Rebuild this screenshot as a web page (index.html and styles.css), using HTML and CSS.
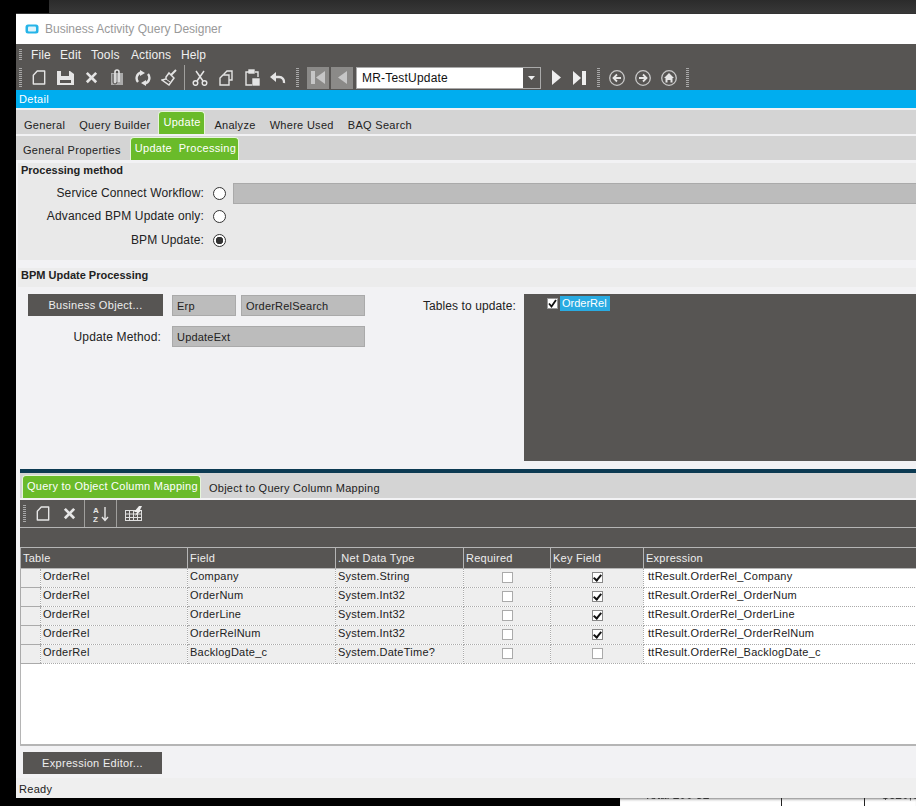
FILE: index.html
```html
<!DOCTYPE html>
<html lang="en">
<head>
<meta charset="utf-8">
<title>Business Activity Query Designer</title>
<link rel="stylesheet" href="styles.css">
</head>
<body>
<svg class="defs" width="0" height="0" aria-hidden="true">
  <symbol id="i-new" viewBox="0 0 16 18"><path d="M6 1.500h8.500v15h-13V6.500z" fill="none" stroke="currentColor" stroke-width="1.600" stroke-linejoin="round"/></symbol>
  <symbol id="i-x" viewBox="0 0 16 16"><path d="M2 4l2-2 4 4 4-4 2 2-4 4 4 4-2 2-4-4-4 4-2-2 4-4z" fill="currentColor"/></symbol>
</svg>
<div class="screen">
  <div class="top-strip"></div>
  <div class="window">
    <header class="titlebar">
      <svg class="app-icon" width="14" height="10" viewBox="0 0 14 10"><rect x="0.5" y="0.5" width="13" height="9" rx="2.5" fill="#25b4e8"/><rect x="3" y="2.5" width="8" height="5" rx="1" fill="#dff4fc"/></svg>
      <span class="title">Business Activity Query Designer</span>
    </header>
    <nav class="menubar">
      <i class="grip"></i>
      <span class="menu m1">File</span><span class="menu m2">Edit</span><span class="menu m3">Tools</span><span class="menu m4">Actions</span><span class="menu m5">Help</span>
    </nav>
    <div class="toolbar">
      <i class="grip"></i>
      <span class="tool"><svg width="14" height="17"><use href="#i-new"/></svg></span>
      <span class="tool"><svg width="17" height="15" viewBox="0 0 17 15"><path d="M0 1h13l4 3v11H0z" fill="currentColor"/><rect x="4" y="1" width="8" height="5" fill="#575553"/><rect x="3" y="10" width="11" height="3" fill="#575553"/></svg></span>
      <span class="tool"><svg width="15" height="15"><use href="#i-x"/></svg></span>
      <span class="tool"><svg width="16" height="17" viewBox="0 0 16 17"><path d="M2 4h12v12H2z" fill="#aaa"/><path d="M6 14V3a2 2 0 0 1 4 0v10" fill="none" stroke="#e4e4e4" stroke-width="1.600"/><path d="M4 5v8a2 2 0 0 0 4 0" fill="none" stroke="#575553" stroke-width="1"/></svg></span>
      <span class="tool"><svg width="16" height="16" viewBox="0 0 16 16" fill="none" stroke="currentColor" stroke-width="2.400"><path d="M3 12A6 6 0 0 1 6 2.400M13 4a6 6 0 0 1-3 9.600"/><path d="M5 0l5 3-5 3zM11 16l-5-3 5-3z" fill="currentColor" stroke="none"/></svg></span>
      <span class="tool"><svg width="17" height="17" viewBox="0 0 17 17"><path d="M10 6l5-5" stroke="currentColor" stroke-width="2"/><path d="M8 4l5 5-5 7-7-5 4-1 0-2z" fill="none" stroke="currentColor" stroke-width="1.500"/><path d="M5 10l4 3" stroke="currentColor"/></svg></span>
      <i class="sep"></i>
      <span class="tool"><svg width="16" height="16" viewBox="0 0 16 16" fill="none" stroke="currentColor" stroke-width="1.500"><circle cx="3.500" cy="13" r="2.300"/><circle cx="12.500" cy="13" r="2.300"/><path d="M5 11L12 1M11 11L4 1"/></svg></span>
      <span class="tool"><svg width="14" height="16" viewBox="0 0 14 16" fill="none" stroke="currentColor" stroke-width="1.400"><path d="M5 5V4l3-3h5v9h-3"/><path d="M4 5h6v10H1V8z"/></svg></span>
      <span class="tool"><svg width="15" height="17" viewBox="0 0 15 17" fill="none" stroke="currentColor" stroke-width="1.400"><path d="M5 3H1v13h6M10 3h3v5"/><rect x="4" y="1" width="5" height="3" fill="currentColor"/><rect x="8" y="10" width="6" height="6" fill="currentColor"/></svg></span>
      <span class="tool"><svg width="16" height="12" viewBox="0 0 16 12" fill="none" stroke="currentColor" stroke-width="2.400"><path d="M4 5h5a5 5 0 0 1 5 6"/><path d="M0 5l6-5v10z" fill="currentColor" stroke="none"/></svg></span>
      <i class="grip gap-grip"></i>
      <span class="navbtn"><svg width="14" height="15" viewBox="0 0 14 15"><rect x="0" y="1" width="4" height="13" fill="#c6c6c6"/><path d="M14 1v13L5 7.500z" fill="#c6c6c6"/></svg></span>
      <span class="navbtn"><svg width="9" height="15" viewBox="0 0 9 15"><path d="M9 1v13L0 7.500z" fill="#c6c6c6"/></svg></span>
      <div class="combo"><span class="combo-text">MR-TestUpdate</span><span class="combo-btn"><svg width="7" height="4"><path d="M0 0h7L3.500 4z" fill="#eee"/></svg></span></div>
      <span class="tool play"><svg width="9" height="15" viewBox="0 0 9 15"><path d="M0 0l9 7.500L0 15z" fill="#eee"/></svg></span>
      <span class="tool last"><svg width="13" height="14" viewBox="0 0 13 14"><path d="M0 0l8 7-8 7z" fill="#eee"/><rect x="9" y="0" width="4" height="14" fill="#eee"/></svg></span>
      <i class="grip grip-b"></i>
      <span class="circle"><svg width="16" height="16" viewBox="0 0 16 16"><circle cx="8" cy="8" r="7.300" fill="none" stroke="#c8c8c8" stroke-width="1.300"/><path d="M12 8H5M8 4.500L4.500 8 8 11.500" fill="none" stroke="#e6e6e6" stroke-width="1.800"/></svg></span>
      <span class="circle"><svg width="16" height="16" viewBox="0 0 16 16"><circle cx="8" cy="8" r="7.300" fill="none" stroke="#c8c8c8" stroke-width="1.300"/><path d="M4 8h7M8 4.500L11.500 8 8 11.500" fill="none" stroke="#e6e6e6" stroke-width="1.800"/></svg></span>
      <span class="circle"><svg width="16" height="16" viewBox="0 0 16 16"><circle cx="8" cy="8" r="7.300" fill="none" stroke="#c8c8c8" stroke-width="1.300"/><path d="M8 3l5 5h-1.500v4.500h-2V10h-3v2.500h-2V8H3z" fill="#e6e6e6"/></svg></span>
      <i class="grip grip-c"></i>
    </div>
    <div class="detail-bar">Detail</div>
    <div class="tabs tabs-a">
      <span class="tab">General</span><span class="tab">Query Builder</span><span class="tab on">Update</span><span class="tab">Analyze</span><span class="tab">Where Used</span><span class="tab">BAQ Search</span>
    </div>
    <div class="tabs tabs-b">
      <span class="tab">General Properties</span><span class="tab on">Update&nbsp; Processing</span>
    </div>
    <main class="content">
      <section class="group-method">
        <h2 class="group-title">Processing method</h2>
        <div class="method-row"><span class="method-label">Service Connect Workflow:</span><i class="radio"></i><span class="field field-wide"></span></div>
        <div class="method-row"><span class="method-label">Advanced BPM Update only:</span><i class="radio"></i></div>
        <div class="method-row"><span class="method-label">BPM Update:</span><i class="radio checked"></i></div>
      </section>
      <section class="group-bpm">
        <h2 class="group-title bpm-title">BPM Update Processing</h2>
        <div class="bpm-body">
          <div class="bpm-left">
            <div class="bpm-row"><span class="btn btn-bo">Business Object...</span><span class="field f-erp">Erp</span><span class="field f-search">OrderRelSearch</span></div>
            <div class="bpm-row row-method"><span class="um-label">Update Method:</span><span class="field f-method">UpdateExt</span></div>
          </div>
          <span class="tables-label">Tables to update:</span>
          <div class="listbox"><span class="lb-item"><span class="lb-check"><svg width="9" height="9" viewBox="0 0 9 9"><path d="M1 4.500l2.500 3L8 1" fill="none" stroke="#111" stroke-width="1.800"/></svg></span><span class="lb-text">OrderRel</span></span></div>
        </div>
      </section>
      <section class="mapping">
        <div class="tabs tabs-c">
          <span class="tab on">Query to Object Column Mapping</span><span class="tab">Object to Query Column Mapping</span>
        </div>
        <div class="grid-toolbar">
          <i class="grip"></i>
          <span class="tool"><svg width="14" height="17"><use href="#i-new"/></svg></span>
          <span class="tool"><svg width="15" height="15"><use href="#i-x"/></svg></span>
          <i class="sep"></i>
          <span class="tool"><svg width="16" height="16" viewBox="0 0 16 16"><text x="0" y="7" class="az">A</text><text x="0" y="15.500" class="az">Z</text><path d="M12 1v13M9 11l3 3.500 3-3.500" fill="none" stroke="currentColor" stroke-width="1.400"/></svg></span>
          <i class="sep"></i>
          <span class="tool"><svg width="17" height="15" viewBox="0 0 17 15"><path d="M0 4.500h17M0 8h17M0 11.500h17M.5 4v11M4.500 4v11M8.500 4v11M12.500 4v11M16.500 4v11M0 14.500h17" stroke="#e0e0e0" fill="none"/><path d="M9 6l5-6h3l-2 4h2l-7 6 2-4z" fill="#eee"/></svg></span>
        </div>
        <div class="group-band"></div>
        <table class="grid">
          <colgroup><col class="c0"><col class="c1"><col class="c2"><col class="c3"><col class="c4"><col class="c5"><col></colgroup>
          <thead>
            <tr><th colspan="2">Table</th><th>Field</th><th>.Net Data Type</th><th>Required</th><th>Key Field</th><th>Expression</th></tr>
          </thead>
          <tbody>
            <tr><td class="rh"></td><td>OrderRel</td><td>Company</td><td>System.String</td><td class="cb"><i class="check"></i></td><td class="cb"><i class="check on"></i></td><td class="expr">ttResult.OrderRel_Company</td></tr>
            <tr><td class="rh"></td><td>OrderRel</td><td>OrderNum</td><td>System.Int32</td><td class="cb"><i class="check"></i></td><td class="cb"><i class="check on"></i></td><td class="expr">ttResult.OrderRel_OrderNum</td></tr>
            <tr><td class="rh"></td><td>OrderRel</td><td>OrderLine</td><td>System.Int32</td><td class="cb"><i class="check"></i></td><td class="cb"><i class="check on"></i></td><td class="expr">ttResult.OrderRel_OrderLine</td></tr>
            <tr><td class="rh"></td><td>OrderRel</td><td>OrderRelNum</td><td>System.Int32</td><td class="cb"><i class="check"></i></td><td class="cb"><i class="check on"></i></td><td class="expr">ttResult.OrderRel_OrderRelNum</td></tr>
            <tr><td class="rh"></td><td>OrderRel</td><td>BacklogDate_c</td><td>System.DateTime?</td><td class="cb"><i class="check"></i></td><td class="cb"><i class="check"></i></td><td class="expr">ttResult.OrderRel_BacklogDate_c</td></tr>
          </tbody>
        </table>
        <div class="grid-empty"></div>
        <div class="actions"><span class="btn btn-expr">Expression Editor...</span></div>
      </section>
    </main>
    <footer class="status">Ready</footer>
  </div>
  <div class="behind">
    <span class="b-cell b1"><span class="b-text">Total 200 52</span></span><span class="b-cell b2"></span><span class="b-cell b3"><span class="b-text">$620,000</span></span>
  </div>
</div>
</body>
</html>
```
FILE: styles.css
```css
* { box-sizing: border-box; }
html, body { margin: 0; padding: 0; background: #000; }
body { font: 12px/14px "Liberation Sans", Arial, sans-serif; color: #222; }
.defs { position: absolute; }
.screen { width: 916px; height: 806px; overflow: hidden; background: #000; }
.top-strip { height: 13px; margin-left: 49px; background: linear-gradient(#2b2b2b, #383838); }
.window { width: 915px; height: 785px; margin-left: 16px; display: flex; flex-direction: column; border-top: 1px solid #333; background: #f2f2f4; }

.titlebar { height: 30px; flex: none; background: #fff; display: flex; align-items: center; padding-left: 9px; gap: 6px; }
.title { color: #999; }

.menubar { height: 21px; flex: none; background: #575553; color: #f0f0f0; position: relative; display: flex; align-items: center; letter-spacing: .1px; }
.menu { position: absolute; top: 4px; }
.m1 { left: 15px; } .m2 { left: 44px; } .m3 { left: 75px; } .m4 { left: 115px; } .m5 { left: 165px; }
.grip { display: block; width: 3px; height: 17px; flex: none; background: repeating-linear-gradient(#a8a8a8 0 1px, transparent 1px 2px); }
.menubar .grip { height: 12px; margin-left: 3px; }

.toolbar { height: 25px; flex: none; background: #575553; color: #e4e4e4; display: flex; align-items: center; padding-left: 3px; }
.toolbar > .grip { height: 20px; margin-right: 4px; }
.tool { width: 26px; display: flex; justify-content: center; align-items: center; flex: none; }
.sep { display: block; width: 1px; height: 25px; flex: none; background: #a09f9d; margin: 0 2px; }
.toolbar > .gap-grip { margin-left: 5px; margin-right: 8px; }
.navbtn { width: 22px; height: 22px; margin-right: 2px; background: #8b8a88; display: flex; align-items: center; justify-content: center; flex: none; }
.combo { width: 185px; height: 22px; margin-left: 1px; border: 1px solid #aaa; display: flex; flex: none; background: #fff; }
.combo-text { flex: 1; padding: 3px 5px; color: #111; letter-spacing: .2px; }
.combo-btn { width: 17px; background: #575553; display: flex; align-items: center; justify-content: center; }
.play { width: 18px; margin-left: 6px; }
.last { width: 20px; margin-left: 4px; }
.toolbar > .grip-b { margin: 0 4px 0 8px; }
.circle { width: 26px; display: flex; justify-content: center; flex: none; }
.toolbar > .grip-c { margin-left: 4px; }

.detail-bar { height: 18px; flex: none; background: #00adef; color: #fff; padding: 2px 3px; margin-bottom: 2px; font-size: 11px; letter-spacing: .3px; }

.tabs { display: flex; flex: none; background: #d4d4d4; height: 24px; align-items: flex-end; font-size: 11px; letter-spacing: .3px; }
.tabs-a { margin-bottom: 2px; padding-left: 1px; }
.tabs-b { margin-bottom: 3px; }
.tab { height: 23px; padding: 6px 7px 0; color: #222; white-space: nowrap; }
.tabs-a .tab { padding-top: 7px; }
.tab.on { background: #6abb2a; color: #fff; border: 1px solid #e6f5da; border-bottom: 0; border-radius: 4px 4px 0 0; padding: 3px 4px 0; }
.tabs-a .tab.on { padding: 3px 4px 0; margin: 0 2px 0 1px; width: 47px; }
.tabs-b .tab:first-child { padding-right: 8px; }
.tabs-b .tab.on { margin-left: 1px; width: 109px; }

.content { flex: 1; min-height: 0; display: flex; flex-direction: column; padding-left: 2px; }
.group-method { height: 97px; flex: none; background: #e9e9e9; margin-bottom: 8px; }
.group-title { margin: 0; font-size: 11px; line-height: 14px; font-weight: bold; padding: 0 0 0 3px; height: 19px; }
.method-row { height: 24px; display: flex; align-items: center; }
.method-row:nth-of-type(1) { height: 22px; }
.method-label { width: 186px; text-align: right; margin-right: 9px; flex: none; letter-spacing: .15px; }
.radio { width: 13px; height: 13px; border: 1px solid #333; border-radius: 50%; background: #fff; flex: none; display: block; margin-right: 7px; }
.radio.checked { background: radial-gradient(circle, #333 0 3.500px, #fff 4px); }
.field { display: block; height: 21px; background: #bcbcbc; border: 1px solid #aaa; padding: 3px 4px; font-size: 11px; flex: none; letter-spacing: .2px; }
.field-wide { flex: 1; }

.group-bpm { height: 201px; flex: none; }
.bpm-title { background: #ececec; }
.bpm-body { margin-left: 2px; display: flex; align-items: flex-start; padding-top: 7px; height: 182px; }
.bpm-left { width: 345px; flex: none; padding-left: 8px; }
.bpm-row { display: flex; align-items: flex-end; height: 22px; }
.row-method { margin-top: 9px; height: 22px; }
.btn { display: flex; align-items: center; justify-content: center; background: #575553; color: #eee; font-size: 11px; height: 22px; letter-spacing: .3px; }
.btn-bo { width: 135px; margin-right: 9px; flex: none; }
.f-erp { width: 64px; margin-right: 5px; }
.f-search { width: 124px; }
.um-label { width: 133px; text-align: right; margin-right: 11px; padding-bottom: 3px; flex: none; letter-spacing: .15px; }
.f-method { width: 193px; }
.tables-label { width: 151px; text-align: right; margin: 5px 0 0 0; flex: none; letter-spacing: .1px; }
.listbox { margin-left: 8px; flex: 1; height: 167px; background: #575553; padding: 2px 0 0 23px; }
.lb-item { display: flex; align-items: center; }
.lb-check { width: 11px; height: 11px; background: #fff; border: 1px solid #999; display: flex; align-items: center; justify-content: center; margin-right: 2px; }
.lb-text { width: 50px; height: 15px; background: #29abe2; color: #fff; font-size: 11px; padding: 0 2px; }

.mapping { flex: 1; min-height: 0; margin-left: 2px; border-top: 4px solid #0c3a52; display: flex; flex-direction: column; }
.tabs-c { height: 25px; margin-bottom: 2px; padding-left: 2px; letter-spacing: .25px; }
.tabs-c .tab.on { height: 23px; width: 179px; padding: 3px 0 0 4px; }
.tabs-c .tab:last-child { padding: 6px 0 0 8px; }
.grid-toolbar { height: 28px; flex: none; background: #575553; color: #e6e6e6; display: flex; align-items: center; padding-left: 3px; border-bottom: 1px solid #b5b5b5; }
.grid-toolbar .grip { margin-right: 4px; height: 18px; }
.grid-toolbar .tool { width: 26px; }
.grid-toolbar .sep { margin: 0 3px 0 2px; height: 27px; }
.az { font: bold 8px "Liberation Sans", sans-serif; fill: #e6e6e6; }
.group-band { height: 20px; flex: none; background: #575553; border-bottom: 1px solid #b5b5b5; }

.grid { width: 911px; border-collapse: collapse; table-layout: fixed; border-left: 1px solid #aaa; font-size: 11px; letter-spacing: .25px; background: #fff; flex: none; }
.c0 { width: 20px; } .c1 { width: 147px; } .c2 { width: 148px; } .c3 { width: 128px; } .c4 { width: 87px; } .c5 { width: 93px; }
.grid th { height: 20px; padding: 0 2px; background: #575553; color: #eee; font-weight: normal; text-align: left; border-right: 1px solid #b5b5b5; border-bottom: 1px solid #b5b5b5; }
.grid td { height: 19px; padding: 0 1px 0 2px; vertical-align: top; background: #eee; border-right: 1px dotted #aaa; border-bottom: 1px dotted #aaa; white-space: nowrap; overflow: hidden; }
.grid td.rh { border-bottom: 1px solid #aaa; }
.grid td.expr { background: #fff; border-right: 0; padding-left: 4px; }
.grid td.cb { padding: 3px 0 0; }
.check { display: block; margin: 0 auto; width: 11px; height: 11px; background: #fff; border: 1px solid #aaa; }
.check.on { border-color: #888; position: relative; }
.check.on::after { content: ""; position: absolute; left: 2.500px; top: 0; width: 3px; height: 6px; border: solid #111; border-width: 0 2px 2px 0; transform: rotate(40deg); }

.grid-empty { flex: 1; min-height: 0; background: #fff; border: 2px solid #b5b5b5; border-width: 0 0 2px 1px; }
.actions { height: 32px; flex: none; padding: 6px 0 0 3px; }
.btn-expr { width: 139px; }

.status { height: 20px; flex: none; background: #efefef; padding: 4px 3px 0; font-size: 11px; line-height: 14px; letter-spacing: .3px; }

.behind { height: 8px; margin-left: 620px; background: #fff; display: flex; overflow: hidden; box-shadow: inset 0 3px 3px -2px #777; font-size: 12px; }
.b-cell { display: block; height: 8px; color: #333; flex: none; overflow: hidden; }
.b-text { display: block; margin-top: -10px; filter: blur(.4px); white-space: nowrap; }
.b1 { width: 162px; padding-left: 24px; border-right: 1px solid #222; }
.b2 { width: 83px; border-right: 1px solid #222; }
.b3 { padding-left: 17px; }
```
